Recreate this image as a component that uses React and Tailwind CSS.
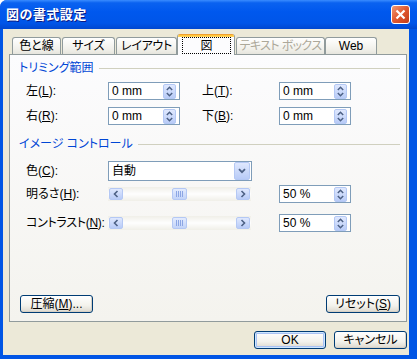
import React from 'react';

const FONT = "font-['Liberation_Sans','Noto_Sans_CJK_JP',sans-serif] [font-feature-settings:'palt']";

// underlined accelerator key
function U({ children }) {
  return <span className="underline underline-offset-[1px]">{children}</span>;
}

function SpinButton() {
  return (
    <div className="w-[13px] h-[15px] rounded-[2px] border border-[#b4c8f4] bg-[linear-gradient(to_bottom,#dfe8fe,#b8cbf7)] flex items-center justify-center">
      <svg width="7" height="11" viewBox="0 0 7 11">
        <path d="M0.8 4 L3.5 1.3 L6.2 4 M0.8 7 L3.5 9.7 L6.2 7" fill="none" stroke="#4d6185" strokeWidth="1.5" />
      </svg>
    </div>
  );
}

function SpinBox({ value }) {
  return (
    <div className="w-[72px] h-[18px] border border-[#7f9db9] bg-white flex items-center pl-[3px] pr-[3px]">
      <span className="flex-1 text-[12px] leading-none text-black whitespace-pre">{value}</span>
      <SpinButton />
    </div>
  );
}

function Dropdown({ value }) {
  return (
    <div className="w-[144px] h-[20px] border border-[#7f9db9] bg-white flex items-center pl-[3px] pr-px">
      <span className="flex-1 text-[12px] leading-none text-black">{value}</span>
      <div className="w-[16px] h-[18px] rounded-[2px] border border-[#b4c8f4] bg-[linear-gradient(to_bottom,#dfe8fe,#b8cbf7)] flex items-center justify-center">
        <svg width="8" height="6" viewBox="0 0 8 6">
          <path d="M1 1.2 L4 4.2 L7 1.2" fill="none" stroke="#4d6185" strokeWidth="1.8" />
        </svg>
      </div>
    </div>
  );
}

function ArrowBtn({ dir }) {
  return (
    <div className="w-[14px] h-[12px] rounded-[2px] border border-[#b4c8f4] bg-[linear-gradient(to_bottom,#dfe8fe,#b8cbf7)] flex items-center justify-center">
      <svg width="6" height="8" viewBox="0 0 6 8">
        <path d={dir === 'left' ? 'M4.5 1 L1.5 4 L4.5 7' : 'M1.5 1 L4.5 4 L1.5 7'} fill="none" stroke="#4d6185" strokeWidth="1.6" />
      </svg>
    </div>
  );
}

function Slider() {
  return (
    <div className="w-[143px] h-[14px] flex items-center px-px bg-[linear-gradient(to_bottom,#f0efe8,#fefefe_50%,#f0efe8)]">
      <ArrowBtn dir="left" />
      <div className="flex-1 flex justify-center">
        <div className="w-[15px] h-[12px] rounded-[2px] border border-[#b4c8f4] bg-[linear-gradient(to_bottom,#e3ebfe,#c2d3f8)] flex items-center justify-center">
          <svg width="7" height="6" viewBox="0 0 7 6">
            <path d="M0.5 0 V6 M2.5 0 V6 M4.5 0 V6 M6.5 0 V6" stroke="#8ca6e4" strokeWidth="1" />
          </svg>
        </div>
      </div>
      <ArrowBtn dir="right" />
    </div>
  );
}

function XpButton({ children, className, isDefault }) {
  return (
    <div
      className={
        'h-[18px] rounded-[3px] border border-[#003c74] bg-[linear-gradient(to_bottom,#ffffff,#f3f2ec_60%,#dcd8ce)] flex items-center justify-center text-[12px] leading-none text-black whitespace-nowrap ' +
        (isDefault ? 'shadow-[inset_0_0_0_1px_#cee7ff,inset_0_0_0_2px_#a9c2f4] ' : 'shadow-[inset_-1px_-1px_0_#d6d0c5] ') +
        className
      }
    >
      {children}
    </div>
  );
}

function GroupTitle({ children }) {
  return (
    <div className="flex items-center h-[16px]">
      <span className="text-[12px] leading-none text-[#0046d5] whitespace-nowrap">{children}</span>
      <div className="flex-1 h-px bg-[#d0d0bf] ml-[5px] mt-px" />
    </div>
  );
}

function Tab({ children, className, disabled }) {
  return (
    <div
      className={
        'h-[17px] rounded-t-[3px] border border-b-0 border-[#919b9c] bg-[linear-gradient(to_bottom,#ffffff,#f1f0ea_70%,#e6e5de)] flex items-center justify-center text-[12px] leading-none whitespace-nowrap overflow-hidden ' +
        (disabled ? 'text-[#aca899] ' : 'text-black ') +
        className
      }
    >
      {children}
    </div>
  );
}

export default function App() {
  return (
    <div className={'w-[417px] h-[359px] flex flex-col bg-[#0055e5] rounded-tl-[7px] overflow-hidden ' + FONT}>
      {/* title bar */}
      <div className="h-[29px] flex items-center pl-[6px] pr-[7px] bg-[linear-gradient(to_bottom,#3a8cff_0%,#0a62f0_10%,#0058ee_40%,#0055e8_80%,#0047d0_100%)]">
        <span className="flex-1 text-[13px] font-bold tracking-[0.5px] text-white leading-none [text-shadow:1px_1px_0_#0a1883]">
          図の書式設定
        </span>
        <div className="w-[19px] h-[19px] rounded-[3px] border border-white bg-[linear-gradient(135deg,#f09a76,#e0582f_50%,#c23c1a)] flex items-center justify-center">
          <svg width="11" height="11" viewBox="0 0 11 11">
            <path d="M1.5 1.5 L9.5 9.5 M9.5 1.5 L1.5 9.5" stroke="white" strokeWidth="2.2" />
          </svg>
        </div>
      </div>

      {/* body */}
      <div className="flex-1 ml-[3px] mr-[8px] mb-[4px] bg-[#ece9d8] flex flex-col pl-[6px] pr-[2px] pt-[5px] pb-[6px]">
        {/* tabs */}
        <div className="h-[20px] flex items-end">
          <Tab className="w-[49px] ml-[3px]">色と線</Tab>
          <Tab className="w-[53px] ml-px">サイズ</Tab>
          <Tab className="w-[61px] ml-px tracking-[-0.3px]">レイアウト</Tab>
          <div className="relative z-10 w-[58px] h-[21px] -mb-px rounded-t-[3px] border-x border-[#919b9c] bg-[#fcfcfe] flex flex-col overflow-hidden">
            <div className="h-[3px] bg-[linear-gradient(to_bottom,#e68b2c,#ffc73c,#ffd66a)]" />
            <div className="ml-[4px] mr-[3px] h-[17px] border border-dotted border-black flex items-center justify-center text-[12px] leading-none text-black">
              図
            </div>
          </div>
          <Tab className="w-[89px] ml-px tracking-[-0.6px]" disabled>テキスト ボックス</Tab>
          <Tab className="w-[52px]">Web</Tab>
        </div>

        {/* tab panel */}
        <div className="h-[268px] border border-[#919b9c] bg-[linear-gradient(to_bottom,#fcfcfe,#f4f3ee)] flex flex-col pl-[9px] pr-[6px] pt-[5px] pb-[8px] text-[12px] text-black">
          <GroupTitle>トリミング範囲</GroupTitle>

          <div className="mt-[6px] ml-[7px] flex items-center h-[18px]">
            <span className="w-[82px] leading-none">左(<U>L</U>):</span>
            <SpinBox value="0 mm" />
            <span className="ml-[22px] w-[77px] leading-none">上(<U>T</U>):</span>
            <SpinBox value="0 mm" />
          </div>
          <div className="mt-[7px] ml-[7px] flex items-center h-[18px]">
            <span className="w-[82px] leading-none">右(<U>R</U>):</span>
            <SpinBox value="0 mm" />
            <span className="ml-[22px] w-[77px] leading-none">下(<U>B</U>):</span>
            <SpinBox value="0 mm" />
          </div>

          <div className="mt-[11px]">
            <GroupTitle>イメージ コントロール</GroupTitle>
          </div>

          <div className="mt-[9px] ml-[7px] flex items-center h-[20px]">
            <span className="w-[82px] leading-none">色(<U>C</U>):</span>
            <Dropdown value="自動" />
          </div>
          <div className="mt-[4px] ml-[7px] flex items-center h-[18px]">
            <span className="w-[82px] leading-none">明るさ(<U>H</U>):</span>
            <Slider />
            <div className="ml-[28px]">
              <SpinBox value="50 %" />
            </div>
          </div>
          <div className="mt-[11px] ml-[7px] flex items-center h-[18px]">
            <span className="w-[82px] leading-none whitespace-nowrap tracking-[-0.3px]">コントラスト(<U>N</U>):</span>
            <Slider />
            <div className="ml-[28px]">
              <SpinBox value="50 %" />
            </div>
          </div>

          <div className="mt-auto flex justify-between">
            <XpButton className="w-[73px] ml-px">圧縮(<U>M</U>)...</XpButton>
            <XpButton className="w-[74px]">リセット(<U>S</U>)</XpButton>
          </div>
        </div>

        {/* dialog buttons */}
        <div className="mt-[9px] flex justify-end gap-[8px]">
          <XpButton className="w-[72px]" isDefault>OK</XpButton>
          <XpButton className="w-[73px]">キャンセル</XpButton>
        </div>
      </div>
    </div>
  );
}
